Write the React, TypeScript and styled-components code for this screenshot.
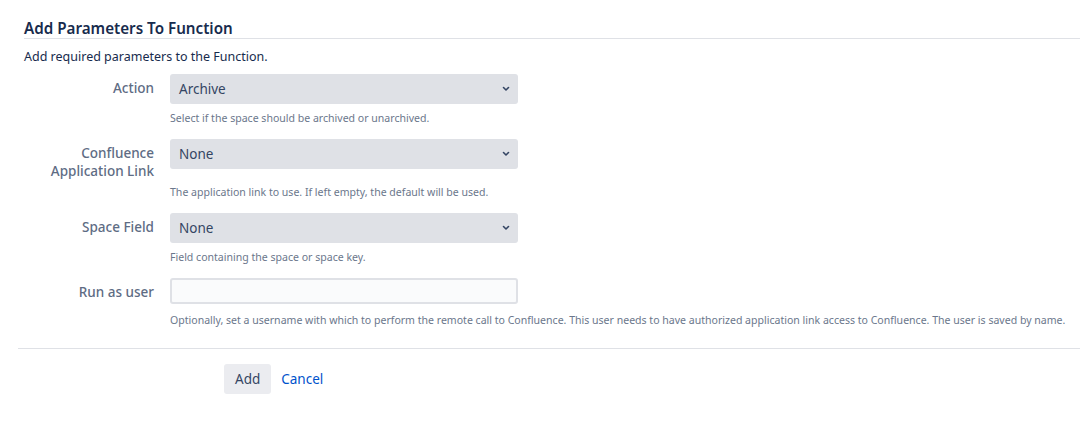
import React from "react";
import styled, { createGlobalStyle } from "styled-components";

const GlobalStyle = createGlobalStyle`
  body {
    margin: 0;
    background: #fff;
    font-family: "Noto Sans", "Open Sans", sans-serif;
    color: #172b4d;
  }
`;

const Page = styled.div`
  padding: 10px 0 0 18px;
`;

const Heading = styled.h2`
  margin: 0 0 0 6px;
  padding: 8px 0 0;
  font-size: 15.2px;
  font-weight: 600;
  color: #172b4d;
  border-bottom: 1px solid #dfe1e6;
  line-height: 20px;
`;

const Intro = styled.p`
  margin: 10px 0 9px 6px;
  font-size: 12.5px;
  line-height: 16px;
`;

const FieldRow = styled.div`
  display: grid;
  grid-template-columns: 136px 348px;
  column-gap: 16px;
  align-items: start;
  margin-bottom: 14px;
`;

const Label = styled.label`
  text-align: right;
  font-size: 13.5px;
  font-weight: 500;
  color: #5e6c84;
  line-height: 18px;
  padding-top: 5px;
`;

const Control = styled.div`
  display: flex;
  flex-direction: column;
`;

const SelectBox = styled.div`
  height: 30px;
  box-sizing: border-box;
  background: #dfe1e6;
  border-radius: 3px;
  display: flex;
  align-items: center;
  justify-content: space-between;
  padding: 0 8px 0 9px;
  font-size: 13.5px;
  color: #344563;
`;

const TextBox = styled.input`
  height: 26px;
  box-sizing: border-box;
  background: #fafbfc;
  border: 2px solid #dfe1e6;
  border-radius: 3px;
  margin: 0;
  width: 348px;
`;

const Help = styled.div<{ $gap: number }>`
  font-size: 10.56px;
  color: #6b778c;
  line-height: 14px;
  margin-top: ${(p) => p.$gap}px;
  white-space: nowrap;
`;

const Footer = styled.div`
  border-top: 1px solid #dfe1e6;
  margin-top: 21px;
  padding: 15px 0 0 206px;
  display: flex;
  align-items: center;
  gap: 10px;
`;

const AddButton = styled.button`
  border: none;
  background: #ebecf0;
  border-radius: 3px;
  height: 30px;
  padding: 0 11px;
  font-family: inherit;
  font-size: 13.5px;
  color: #344563;
`;

const CancelLink = styled.a`
  color: #0052cc;
  font-size: 13.5px;
  text-decoration: none;
`;

const Chevron = () => (
  <svg width="8" height="6" viewBox="0 0 8 6">
    <path d="M1.5 1.5 L4 4 L6.5 1.5" fill="none" stroke="#344563" strokeWidth="1.6" strokeLinecap="round" strokeLinejoin="round" />
  </svg>
);

const fields = [
  { label: ["Action"], value: "Archive", help: "Select if the space should be archived or unarchived.", gap: 7 },
  { label: ["Confluence", "Application Link"], value: "None", help: "The application link to use. If left empty, the default will be used.", gap: 16 },
  { label: ["Space Field"], value: "None", help: "Field containing the space or space key.", gap: 7 },
];

export default function App() {
  return (
    <Page>
      <GlobalStyle />
      <Heading>Add Parameters To Function</Heading>
      <Intro>Add required parameters to the Function.</Intro>
      {fields.map((f) => (
        <FieldRow key={f.value + f.label[0]}>
          <Label>
            {f.label.map((l) => (
              <div key={l}>{l}</div>
            ))}
          </Label>
          <Control>
            <SelectBox>
              <span>{f.value}</span>
              <Chevron />
            </SelectBox>
            <Help $gap={f.gap}>{f.help}</Help>
          </Control>
        </FieldRow>
      ))}
      <FieldRow>
        <Label>Run as user</Label>
        <Control>
          <TextBox />
          <Help $gap={9}>
            Optionally, set a username with which to perform the remote call to Confluence. This user needs to have authorized application link access to Confluence. The user is saved by name.
          </Help>
        </Control>
      </FieldRow>
      <Footer>
        <AddButton>Add</AddButton>
        <CancelLink href="#">Cancel</CancelLink>
      </Footer>
    </Page>
  );
}
